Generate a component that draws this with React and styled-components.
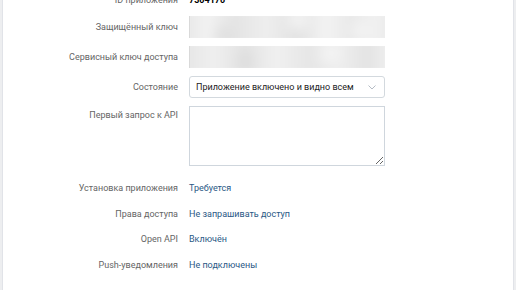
import React from "react";
import styled, { createGlobalStyle } from "styled-components";

const Global = createGlobalStyle`
  html, body {
    margin: 0;
    padding: 0;
    background: #edeef0;
    font-family: Roboto, "Open Sans", "Liberation Sans", sans-serif;
    font-size: 9px;
    height: 290px;
    overflow: hidden;
  }
`;

const Card = styled.div`
  margin: 0 2px;
  height: 290px;
  background: #fff;
  border-left: 1px solid #e1e3e8;
  border-right: 1px solid #e1e3e8;
  overflow: hidden;
`;

const Form = styled.div`
  display: grid;
  grid-template-columns: 175px 196px;
  column-gap: 11px;
  row-gap: 8px;
  margin-top: -8px;
  align-items: center;
`;

const Info = styled.div`
  display: grid;
  grid-template-columns: 175px auto;
  column-gap: 11px;
  row-gap: 9.6px;
  margin-top: 14px;
`;

const Label = styled.div`
  text-align: right;
  color: #656565;
  line-height: 16px;
  align-self: ${(p) => (p.$top ? "start" : "center")};
  padding-top: ${(p) => (p.$top ? "1px" : "0")};
`;

const IdValue = styled.div`
  font-weight: 700;
  color: #000;
  line-height: 16px;
`;

const Secret = styled.div`
  height: 22px;
  box-sizing: border-box;
  border-left: 1px solid #d9d9d9;
  overflow: hidden;
  position: relative;
  background: #ebebeb;
`;

const Smudge = styled.div`
  position: absolute;
  inset: -8px;
  filter: blur(5px);
  background: ${(p) => p.$bg};
`;

const Select = styled.div`
  height: 22px;
  box-sizing: border-box;
  border: 1px solid #d3d9de;
  border-radius: 3px;
  display: flex;
  align-items: center;
  justify-content: space-between;
  padding: 0 8px 0 6px;
  color: #222;
  white-space: nowrap;
`;

const Area = styled.textarea`
  height: 60px;
  width: 196px;
  box-sizing: border-box;
  border: 1px solid #cfd6dd;
  border-radius: 0;
  resize: vertical;
  margin: 0;
  display: block;
  font-family: inherit;
  outline: none;
`;

const Link = styled.a`
  color: #2a5885;
  line-height: 16px;
  text-decoration: none;
`;

const smudgeA =
  "radial-gradient(circle at 20% 70%, #dedede 0, transparent 14px), radial-gradient(circle at 55% 30%, #f6f6f6 0, transparent 16px), radial-gradient(circle at 85% 60%, #f4f4f4 0, transparent 14px), linear-gradient(90deg, #e6e6e6 0%, #f2f2f2 12%, #e4e4e4 25%, #eeeeee 40%, #e2e2e2 55%, #f3f3f3 68%, #e9e9e9 80%, #f1f1f1 92%, #e8e8e8 100%)";
const smudgeB =
  "radial-gradient(circle at 30% 60%, #dcdcdc 0, transparent 14px), radial-gradient(circle at 70% 40%, #f5f5f5 0, transparent 16px), linear-gradient(90deg, #e5e5e5 0%, #efefef 15%, #e3e3e3 30%, #f0f0f0 45%, #e6e6e6 60%, #eeeeee 75%, #e3e3e3 88%, #f2f2f2 100%)";

const info = [
  ["Установка приложения", "Требуется"],
  ["Права доступа", "Не запрашивать доступ"],
  ["Open API", "Включён"],
  ["Push-уведомления", "Не подключены"],
];

export default function App() {
  return (
    <>
      <Global />
      <Card>
        <Form>
          <Label>ID приложения</Label>
          <IdValue>7304170</IdValue>

          <Label>Защищённый ключ</Label>
          <Secret>
            <Smudge $bg={smudgeA} />
          </Secret>

          <Label>Сервисный ключ доступа</Label>
          <Secret>
            <Smudge $bg={smudgeB} />
          </Secret>

          <Label>Состояние</Label>
          <Select>
            <span>Приложение включено и видно всем</span>
            <svg width="8" height="5" viewBox="0 0 8 5">
              <path d="M0.5 0.5 L4 4 L7.5 0.5" fill="none" stroke="#b5bcc5" strokeWidth="1" />
            </svg>
          </Select>

          <Label $top>Первый запрос к API</Label>
          <Area />
        </Form>

        <Info>
          {info.map(([k, v]) => (
            <React.Fragment key={k}>
              <Label>{k}</Label>
              <Link href="#">{v}</Link>
            </React.Fragment>
          ))}
        </Info>
      </Card>
    </>
  );
}
